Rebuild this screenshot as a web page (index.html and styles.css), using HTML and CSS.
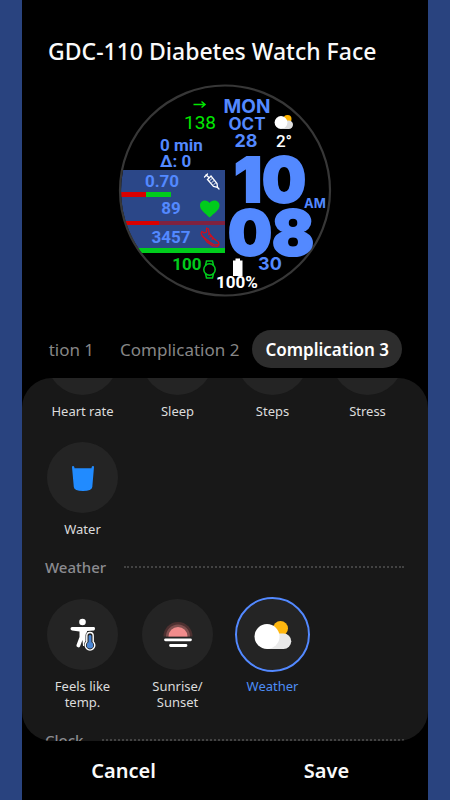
FILE: index.html
```html
<!DOCTYPE html>
<html lang="en">
<head>
<meta charset="utf-8">
<meta name="viewport" content="width=device-width, initial-scale=1">
<title>GDC-110 Diabetes Watch Face</title>
<link rel="stylesheet" href="styles.css">
</head>
<body>
<main class="screen">
  <h1 class="title">GDC-110 Diabetes Watch Face</h1>

  <svg class="watch" viewBox="118 84 214 214" role="img" aria-label="Watch face preview">
    <defs>
      <clipPath id="dial"><circle cx="225" cy="191" r="104"/></clipPath>
    </defs>
    <circle cx="225" cy="191" r="105" fill="#000"/>
    <g clip-path="url(#dial)">
      <rect x="118" y="170" width="107" height="79" fill="#2b4788"/>
      <rect x="118" y="192" width="28" height="5" fill="#d90000"/>
      <rect x="146" y="192" width="25" height="5" fill="#00cc1c"/>
      <rect x="118" y="221" width="41" height="4" fill="#d90000"/>
      <rect x="159" y="221" width="66" height="4" fill="#80223f"/>
      <rect x="118" y="248" width="107" height="5" fill="#00cc1c"/>
    </g>
    <circle cx="225" cy="190.500" r="105" fill="none" stroke="#373737" stroke-width="2.200"/>

    <path d="M193.500 104.500H204M201.500 101.500l3.500 3-3.500 3" fill="none" stroke="#00e800" stroke-width="1.500"/>
    <text class="bright" x="200" y="129" font-size="19" text-anchor="middle">138</text>
    <g class="bold accent" font-size="17">
      <text x="160" y="151">0 min</text>
      <text x="160" y="167">Δ: 0</text>
      <text x="162" y="187" text-anchor="middle">0.70</text>
      <text x="171" y="214" text-anchor="middle">89</text>
      <text x="171" y="243" text-anchor="middle">3457</text>
    </g>
    <text class="bold green" x="187" y="270" font-size="17" text-anchor="middle">100</text>

    <g class="inter accent" text-anchor="middle">
      <text x="247" y="113" font-size="19">MON</text>
      <text x="247" y="130" font-size="17">OCT</text>
      <text x="246" y="147" font-size="18">28</text>
      <text x="315" y="208" font-size="13">AM</text>
      <text x="270" y="270" font-size="18">30</text>
      <text class="heavy" x="270" y="202" font-size="62">10</text>
      <text class="heavy" x="271" y="255" font-size="62">08</text>
    </g>
    <text class="medium white" x="284" y="147" font-size="17" text-anchor="middle">2°</text>

    <circle cx="287.500" cy="119" r="4" fill="#ffb400"/>
    <rect x="280" y="120.500" width="13" height="8.500" rx="4.200" fill="#dedede"/>
    <circle cx="281" cy="122.500" r="6.400" fill="#fff"/>

    <g fill="none" stroke="#fff" stroke-linecap="round">
      <path d="M207.500 179.500l3.500-3.500 6 7.500.5 4-4-1z" stroke-width="1.300"/>
      <path d="M210 180.500l2-2M212 182.500l2-2M214 184.500l1.500-1.500" stroke-width="1"/>
      <path d="M209 177.500l-3-2.500M204.500 177l3-3M217.500 187.500l1.500 1.500" stroke-width="1.300"/>
    </g>
    <path d="M209.500 217.500C205 213 200 210 200 205.500C200 199.500 207.500 199 209.500 203C211.500 199 219.500 199.500 219.500 205.500C219.500 210 214.500 213 209.500 217.500Z" fill="#00cc1c"/>
    <g fill="none" stroke="#d80c18" stroke-width="1.200" stroke-linejoin="round">
      <path d="M202 231.500l2 1.500 2.500-1 0-4 2 1 .5 4 4.500 5.500 5 3.500.5 3-2 1.500-4-.5-6-4-4.500-6-1.500-2.500z"/>
      <path d="M201.500 235.500l8 6.500 5 3 4.500-.5M208 235l1.500-1M209.500 237.500l2-1.500M211.500 239.500l2-1.500"/>
    </g>
    <g fill="none" stroke="#00cc1c" stroke-width="1.500">
      <circle cx="209.500" cy="269.500" r="5.700"/>
      <path d="M205.500 265.500l1-4.500h6l1 4.500M205.500 273.500l1 4.500h6l1-4.500"/>
    </g>
    <path d="M235.500 258.500h4.500v2h2.500v15.500h-9.500v-15.500h2.500z" fill="#fff"/>
    <text class="bold white" x="237" y="288" font-size="17" text-anchor="middle">100%</text>
  </svg>

  <nav class="tabs" aria-label="Complications">
    <button class="tab" type="button">Complication 1</button>
    <button class="tab" type="button">Complication 2</button>
    <button class="tab tab-active" type="button">Complication 3</button>
  </nav>

  <section class="panel">
    <div class="list">
      <div class="grid">
        <button class="item" type="button"><span class="disc"></span>Heart rate</button>
        <button class="item" type="button"><span class="disc"></span>Sleep</button>
        <button class="item" type="button"><span class="disc"></span>Steps</button>
        <button class="item" type="button"><span class="disc"></span>Stress</button>
        <button class="item" type="button"><span class="disc">
          <svg class="icon" viewBox="0 0 40 40" aria-hidden="true">
            <path d="M9 9Q9 8 10 8T11.300 9L11.500 10.300H28.500L28.700 9Q29 8 30 8T31 9L29.300 29Q28.800 33 20 33T10.800 29Z" fill="#218bff"/>
          </svg></span>Water</button>
      </div>

      <h2 class="heading">Weather</h2>
      <div class="grid">
        <button class="item" type="button"><span class="disc">
          <svg class="icon" viewBox="0 0 40 40" aria-hidden="true">
            <circle cx="19.500" cy="7" r="3.300" fill="#fff"/>
            <path d="M9 12H31Q32 12 32 13.500T31 15.500L24 16V31H20L19.500 25L17 31.500Q16 33 14.500 32Q13 31.500 13.500 30L16.500 22V16.500L9 15.500Q7.500 15 7.500 13.700T9 12Z" fill="#fff"/>
            <path d="M27 16a4.500 4.500 0 0 1 4.500 4.500v5.500a6 6 0 1 1-9 0v-5.500a4.500 4.500 0 0 1 4.500-4.500z" fill="#242424"/>
            <path d="M27 17.500a3.200 3.200 0 0 1 3.200 3.200v6a4.800 4.800 0 1 1-6.400 0v-6a3.200 3.200 0 0 1 3.200-3.200z" fill="#242424" stroke="#fff" stroke-width="1.400"/>
            <path d="M27 21.500V30" stroke="#4b86d4" stroke-width="2.800" stroke-linecap="round"/>
            <circle cx="27" cy="30.300" r="3.200" fill="#4b86d4"/>
          </svg></span>Feels like temp.</button>
        <button class="item" type="button"><span class="disc">
          <svg class="icon" viewBox="0 0 40 40" aria-hidden="true">
            <path d="M5.500 21.500a14.500 14.500 0 0 1 29 0z" fill="#4d3030"/>
            <path d="M8 21.500a12 12 0 0 1 24 0z" fill="#80504f"/>
            <path d="M10.500 21.500a9.500 9.500 0 0 1 19 0z" fill="#f28c8c"/>
            <path d="M7.500 24.800h25M12.500 30.500h15.500" stroke="#fff" stroke-width="2.800" stroke-linecap="round"/>
          </svg></span>Sunrise/<br>Sunset</button>
        <button class="item item-active" type="button"><span class="disc">
          <svg class="icon" viewBox="0 0 40 40" aria-hidden="true">
            <circle cx="27.500" cy="13.500" r="7.500" fill="#ffb70f"/>
            <path d="M14 18.500h16.500a7.700 7.700 0 0 1 0 15.500H14z" fill="#e9e9e9"/>
            <circle cx="14" cy="21.500" r="12.500" fill="#fff"/>
          </svg></span>Weather</button>
      </div>

      <h2 class="heading">Clock</h2>
    </div>
  </section>

  <footer class="actions">
    <button class="action" type="button">Cancel</button>
    <button class="action" type="button">Save</button>
  </footer>
</main>
</body>
</html>
```

FILE: styles.css
```css
* {
  box-sizing: border-box;
}

body {
  margin: 0;
  background: #29437f;
  color: #fafafa;
  font-family: "Noto Sans", "Open Sans", sans-serif;
}

button {
  margin: 0;
  padding: 0;
  border: 0;
  background: none;
  color: inherit;
  font: inherit;
}

.screen {
  display: flex;
  flex-direction: column;
  height: 100vh;
  margin: 0 22px;
  background: #000;
}

.title {
  margin: 34px 26px 16px;
  font-size: 23px;
  font-weight: 500;
  line-height: 34px;
  white-space: nowrap;
}

.watch {
  flex: none;
  align-self: center;
  width: 214px;
  font-family: Roboto, sans-serif;
}

.inter {
  font-family: Inter, sans-serif;
  font-weight: 700;
}

.medium {
  font-weight: 500;
}

.bold {
  font-weight: 700;
}

.heavy {
  font-weight: 900;
  stroke: #5389ff;
  stroke-width: 2px;
}

.accent {
  fill: #5389ff;
}

.bright {
  fill: #00e800;
}

.green {
  fill: #00cc1c;
}

.white {
  fill: #fff;
}

.tabs {
  display: flex;
  flex: none;
  justify-content: flex-end;
  margin: 32px 26px 10px;
  overflow: hidden;
}

.tab {
  flex: none;
  height: 38px;
  padding: 0 13px;
  border-radius: 19px;
  color: #868686;
  font-size: 17px;
  white-space: nowrap;
}

.tab-active {
  background: #2d2d2d;
  color: #fff;
  font-weight: 600;
}

.panel {
  flex: 1;
  min-height: 0;
  overflow: hidden;
  border-radius: 30px;
  background: #181818;
}

.list {
  margin-top: -54px;
  padding: 0 13px;
}

.grid {
  display: grid;
  grid-template-columns: repeat(4, 1fr);
  row-gap: 23px;
}

.item {
  display: flex;
  flex-direction: column;
  align-items: center;
  justify-content: flex-start;
  padding: 0 12px;
  color: #dcdcdc;
  font-size: 13px;
  line-height: 16px;
}

.disc {
  display: grid;
  place-items: center;
  width: 71px;
  height: 71px;
  margin-bottom: 8px;
  border-radius: 50%;
  background: #242424;
}

.item-active {
  color: #4d8df5;
}

.item-active .disc {
  outline: 2px solid #5389ff;
}

.icon {
  width: 40px;
  height: 40px;
}

.heading {
  display: flex;
  align-items: center;
  gap: 18px;
  margin: 19px 11px 21px 10px;
  color: #8b8b90;
  font-size: 15px;
  font-weight: 500;
  line-height: 22px;
}

.heading::after {
  content: "";
  flex: 1;
  border-top: 2px dotted #424242;
}

.actions {
  display: grid;
  flex: none;
  grid-template-columns: 1fr 1fr;
  height: 59px;
}

.action {
  font-size: 20px;
  font-weight: 600;
}
```
